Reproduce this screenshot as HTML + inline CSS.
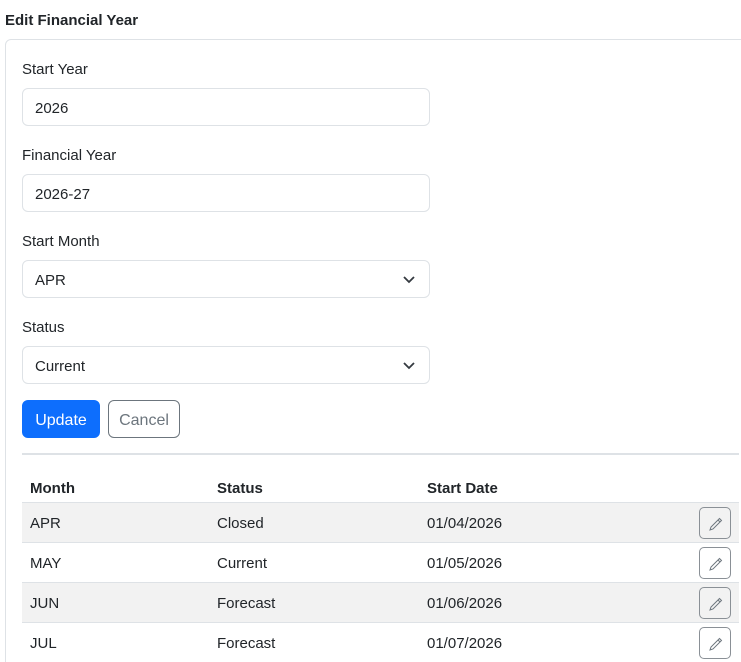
<!DOCTYPE html>
<html style="width:741px;height:662px;overflow:hidden"><head><meta charset="utf-8"><style>
*{box-sizing:border-box;margin:0;padding:0}
body{width:741px;height:662px;overflow:hidden;background:#fff;font-family:"Liberation Sans",sans-serif;color:#212529;position:relative}
.a{position:absolute}
h1{position:absolute;left:5px;top:12px;font-size:15px;font-weight:bold;color:#212529}
.card{position:absolute;left:5px;top:39px;width:760px;height:630px;border:1px solid #dee2e6;border-radius:6px}
.lbl{position:absolute;left:22px;font-size:15px}
.inp{position:absolute;left:22px;width:408px;height:38px;border:1px solid #dee2e6;border-radius:6px;font-size:15px;padding:0 12px;line-height:39px}
.chev{position:absolute;right:14px;top:13px}
.btn{position:absolute;top:400px;height:38px;border-radius:6px;font-size:16px;line-height:39px;text-align:center}
.row{position:absolute;left:22px;width:717px;height:40px;border-top:1px solid #dee2e6;font-size:15px;line-height:42px}
.row span{position:absolute}
.eb{position:absolute;left:677px;top:4px;width:32px;height:32px;border:1px solid #8a9096;border-radius:5px}
.eb svg{position:absolute;left:8px;top:8px}
</style></head><body>
<h1>Edit Financial Year</h1>
<div class="card"></div>
<div class="lbl" style="top:61px">Start Year</div>
<div class="inp" style="top:88px">2026</div>
<div class="lbl" style="top:147px">Financial Year</div>
<div class="inp" style="top:174px">2026-27</div>
<div class="lbl" style="top:233px">Start Month</div>
<div class="inp" style="top:260px">APR<svg class="chev" width="12" height="10" viewBox="0 0 12 10"><path d="M1 3l5 5 5-5" fill="none" stroke="#343a40" stroke-width="1.8"/></svg></div>
<div class="lbl" style="top:319px">Status</div>
<div class="inp" style="top:346px">Current<svg class="chev" width="12" height="10" viewBox="0 0 12 10"><path d="M1 3l5 5 5-5" fill="none" stroke="#343a40" stroke-width="1.8"/></svg></div>
<div class="btn" style="left:22px;width:78px;background:#0d6efd;color:#fff;border:1px solid #0d6efd">Update</div>
<div class="btn" style="left:108px;width:72px;color:#6c757d;border:1px solid #6c757d">Cancel</div>
<div class="a" style="left:22px;top:453px;width:717px;height:2px;background:#dee2e6"></div>
<div class="row" style="top:468px;border-top:none;font-weight:bold;height:34px"><span style="left:8px">Month</span><span style="left:195px">Status</span><span style="left:405px">Start Date</span></div>
<div class="row" style="top:502px;background:#f2f2f2"><span style="left:8px">APR</span><span style="left:195px">Closed</span><span style="left:405px">01/04/2026</span><div class="eb"><svg width="16" height="16" viewBox="0 0 16 16"><path d="M11.5 2.5l2 2L5 13l-3 1 1-3z M10 4l2 2" fill="none" stroke="#6c757d" stroke-width="1"/></svg></div></div>
<div class="row" style="top:542px"><span style="left:8px">MAY</span><span style="left:195px">Current</span><span style="left:405px">01/05/2026</span><div class="eb"><svg width="16" height="16" viewBox="0 0 16 16"><path d="M11.5 2.5l2 2L5 13l-3 1 1-3z M10 4l2 2" fill="none" stroke="#6c757d" stroke-width="1"/></svg></div></div>
<div class="row" style="top:582px;background:#f2f2f2"><span style="left:8px">JUN</span><span style="left:195px">Forecast</span><span style="left:405px">01/06/2026</span><div class="eb"><svg width="16" height="16" viewBox="0 0 16 16"><path d="M11.5 2.5l2 2L5 13l-3 1 1-3z M10 4l2 2" fill="none" stroke="#6c757d" stroke-width="1"/></svg></div></div>
<div class="row" style="top:622px"><span style="left:8px">JUL</span><span style="left:195px">Forecast</span><span style="left:405px">01/07/2026</span><div class="eb"><svg width="16" height="16" viewBox="0 0 16 16"><path d="M11.5 2.5l2 2L5 13l-3 1 1-3z M10 4l2 2" fill="none" stroke="#6c757d" stroke-width="1"/></svg></div></div>
</body></html>
